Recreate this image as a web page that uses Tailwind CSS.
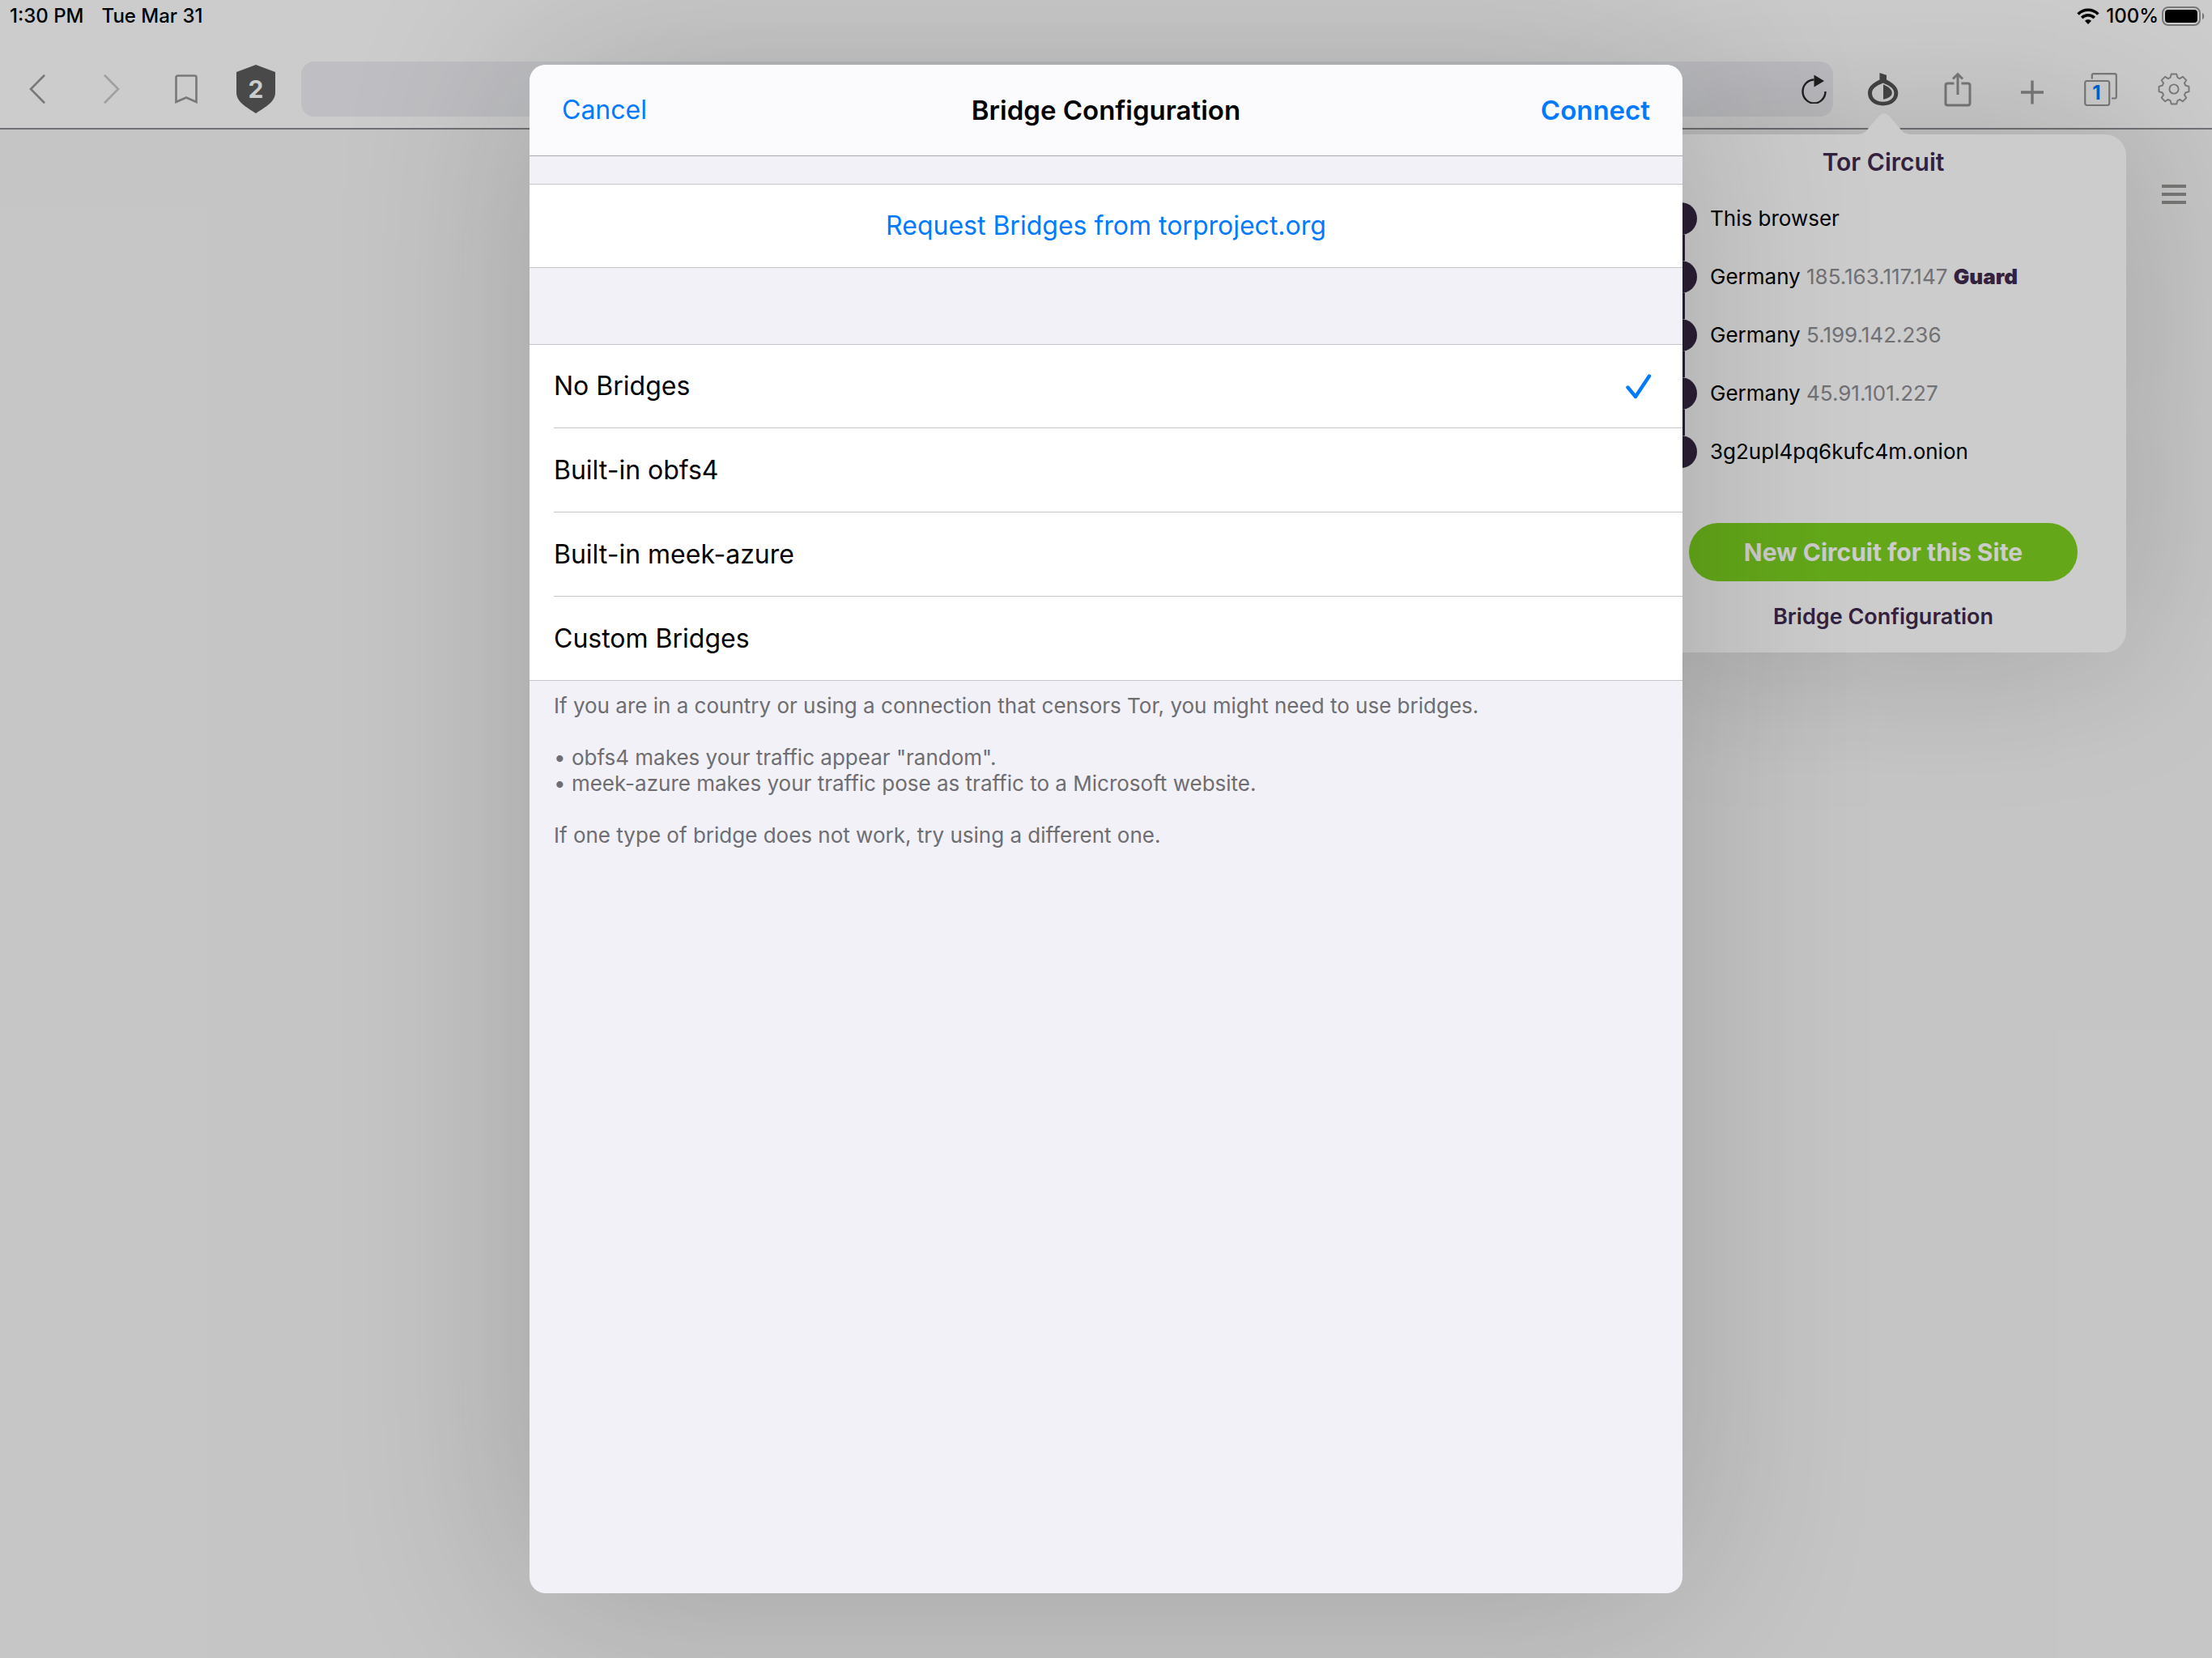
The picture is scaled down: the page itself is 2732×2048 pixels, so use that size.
<!DOCTYPE html>
<html lang="en">
<head>
<meta charset="utf-8">
<meta name="viewport" content="width=device-width, initial-scale=1">
<title>Bridge Configuration</title>
<script src="https://cdn.jsdelivr.net/npm/@tailwindcss/browser@4"></script>
</head>
<body class="bg-[#f7f7f7] font-['Inter',sans-serif] text-black">
<div class="relative flex min-h-screen flex-col overflow-hidden">

  <!-- Browser chrome -->
  <header class="border-b-2 border-[#8e8e93] bg-white">
    <div class="flex h-10 items-center justify-between pr-2 pl-3 text-[24px] leading-8 font-medium">
      <div class="flex gap-[22px]">
        <span>1:30 PM</span>
        <span>Tue Mar 31</span>
      </div>
      <div class="flex items-center gap-1">
        <svg class="mr-1 h-5 w-7" viewBox="0 0 28 20" fill="none" stroke="#000" stroke-width="3.6" aria-hidden="true">
          <path d="M1.6 7.4a17.5 17.5 0 0 1 24.8 0"/>
          <path d="M6.2 12a11 11 0 0 1 15.6 0"/>
          <path d="M14 20l-4-4.3a5.6 5.6 0 0 1 8 0z" fill="#000" stroke="none"/>
        </svg>
        <span>100%</span>
        <svg class="h-6 w-[54px]" viewBox="0 0 54 24" aria-label="Battery full">
          <rect x="1" y="1" width="46" height="22" rx="7" fill="none" stroke="#979797" stroke-width="2"/>
          <rect x="4" y="4" width="40" height="16" rx="4"/>
          <path d="M50 8c3 1 3 7 0 8z" fill="#979797"/>
        </svg>
      </div>
    </div>

    <nav class="flex h-[118px] items-center pt-[22px] text-[#979797]" aria-label="Browser toolbar">
      <button class="flex h-20 w-[92px] items-center justify-center" aria-label="Back">
        <svg class="h-9 w-5" viewBox="0 0 20 36" fill="none" stroke="currentColor" stroke-width="2.6" stroke-linecap="round"><path d="M18.3 1.5L2 18L18.3 34.5"/></svg>
      </button>
      <button class="flex h-20 w-[92px] items-center justify-center text-[#c9c9c9]" aria-label="Forward">
        <svg class="h-9 w-5" viewBox="0 0 20 36" fill="none" stroke="currentColor" stroke-width="2.6" stroke-linecap="round"><path d="M1.7 1.5L18 18L1.7 34.5"/></svg>
      </button>
      <button class="flex h-20 w-[92px] items-center justify-center" aria-label="Bookmarks">
        <svg class="h-9 w-7" viewBox="0 0 28 36" fill="none" stroke="currentColor" stroke-width="2.6"><path d="M1.5 34V3.500a2 2 0 0 1 2-2h21a2 2 0 0 1 2 2V34L14 28.500z"/></svg>
      </button>
      <button class="grid h-20 w-20 place-items-center" aria-label="Blocked content: 2">
        <svg class="col-start-1 row-start-1 h-[60px] w-12" viewBox="0 0 48 60" fill="#5c5c5c"><path d="M24 0L48 9V34C48 46 36 52 24 60C12 52 0 46 0 34V9Z"/></svg>
        <span class="col-start-1 row-start-1 text-[30px] leading-9 font-bold text-white">2</span>
      </button>
      <form class="ml-4 flex h-[68px] flex-1 items-center rounded-2xl bg-[#efeff4] pr-2">
        <input type="text" aria-label="Address" class="h-full min-w-0 flex-1 bg-transparent px-4 text-[32px] outline-none">
        <button type="button" aria-label="Reload">
          <svg class="h-9 w-[31px]" viewBox="0 0 31 36" fill="none" stroke="#282828" stroke-width="2.4"><path d="M15.500 6.500A14 14.500 0 1 0 29.500 21"/><path d="M15.500 0.500L28 8L15.500 15.500z" fill="#282828" stroke="none"/></svg>
        </button>
      </form>
      <button class="ml-4 flex h-20 w-[92px] items-center justify-center" aria-label="Tor circuit">
        <svg class="h-[41px] w-[38px]" viewBox="0 0 38 41" fill="#555"><path fill-rule="evenodd" d="M14.500 0L23 2.700V8.500C31 12.500 37.300 17.500 37.300 25C37.300 34 29.500 40.400 18.700 40.400C7.800 40.400 0 34 0 25C0 17.500 6 12.500 14.500 8.500ZM18.700 12.500C12 15.500 5 18.500 5 25C5 31.500 10.500 35.800 18.700 35.800C26.800 35.800 32.400 31.500 32.400 25C32.400 18.500 25.500 15.500 18.700 12.500Z"/><path d="M19 14.300C24 16.500 29.800 20 29.800 24.700C29.800 29 24.500 31.500 19 32.800Z"/></svg>
      </button>
      <button class="flex h-20 w-[92px] items-center justify-center" aria-label="Share">
        <svg class="h-[43px] w-[34px]" viewBox="0 0 34 43" fill="none" stroke="currentColor" stroke-width="3"><path d="M12.500 14H4.500a2.500 2.500 0 0 0-2.500 2.500V38.500a2.500 2.500 0 0 0 2.500 2.500H29.500a2.500 2.500 0 0 0 2.500-2.500V16.500a2.500 2.500 0 0 0-2.500-2.500H21.500"/><path d="M17 28V2.500M11 8.500L17 2.500l6 6"/></svg>
      </button>
      <button class="flex h-20 w-[92px] items-center justify-center" aria-label="New tab">
        <svg class="h-10 w-7" viewBox="0 0 28 40" fill="none" stroke="currentColor" stroke-width="3.4"><path d="M14 9.500v29M0 24h28"/></svg>
      </button>
      <button class="grid h-20 w-[76px] place-content-center" aria-label="Tabs: 1">
        <svg class="col-start-1 row-start-1 size-[41px]" viewBox="0 0 41 41" fill="none" stroke="currentColor" stroke-width="2.2"><rect x="1.200" y="10" width="30" height="30" rx="2.5"/><path d="M9.800 7.500V3.200a2 2 0 0 1 2-2H37.800a2 2 0 0 1 2 2V29.500a2 2 0 0 1-2 2H34"/></svg>
        <span class="col-start-1 row-start-1 w-8 self-end text-center text-[24px] leading-8 font-bold text-[#007aff]">1</span>
      </button>
      <button class="flex h-20 w-[100px] items-center justify-center pl-1.5" aria-label="Settings">
        <svg class="size-10" viewBox="-20 -20 40 40" fill="none" stroke="currentColor" stroke-width="1.9" stroke-linejoin="round">
          <path d="M-3.200-18.500H3.200L4.500-14.200Q6 -13.600 7.200-12.900L10.800-15.300L15.300-10.800L12.900-7.200Q13.700-6 14.200-4.500L18.500-3.200V3.200L14.200 4.500Q13.700 6 12.900 7.200L15.300 10.800L10.800 15.300L7.200 12.900Q6 13.600 4.500 14.200L3.200 18.500H-3.200L-4.500 14.200Q-6 13.600-7.200 12.900L-10.800 15.300L-15.300 10.800L-12.900 7.200Q-13.700 6-14.200 4.500L-18.500 3.200V-3.200L-14.200-4.500Q-13.700-6-12.900-7.200L-15.300-10.800L-10.800-15.300L-7.200-12.900Q-6-13.600-4.500-14.200Z"/>
          <circle r="5.6"/>
        </svg>
      </button>
    </nav>
  </header>

  <!-- Page content -->
  <main class="flex flex-1 items-start justify-end pt-[68px] pr-8">
    <button class="flex w-[30px] flex-col gap-1.5" aria-label="Menu">
      <span class="h-1 bg-[#969694]"></span>
      <span class="h-1 bg-[#969694]"></span>
      <span class="h-1 bg-[#969694]"></span>
    </button>
  </main>

  <!-- Tor circuit popover -->
  <aside class="absolute top-[166px] right-[106px] w-[600px] rounded-[26px] bg-white px-[60px] text-[#3f2b4f] shadow-[0_0_200px_rgba(0,0,0,0.2)]" aria-labelledby="circuit-title">
    <svg class="absolute -top-[26px] left-[266px] h-[27px] w-[70px]" viewBox="0 0 70 27" fill="#fff" aria-hidden="true"><path d="M0 26C8 26 12 24 16 18L28 4C32-1 38-1 42 4L54 18C58 24 62 26 70 26V27H0Z"/></svg>
    <h2 id="circuit-title" class="pt-3.5 text-center text-[30px] leading-10 font-semibold">Tor Circuit</h2>
    <ol class="-mx-[30px] mt-[30px] text-[26px] leading-8 text-black">
      <li class="flex h-[72px] gap-4"><span class="flex w-10 flex-col items-center"><span class="size-10 shrink-0 rounded-full bg-[#352541]"></span><span class="w-2.5 flex-1 bg-[#352541]"></span></span><span class="pt-1">This browser</span></li>
      <li class="flex h-[72px] gap-4"><span class="flex w-10 flex-col items-center"><span class="size-10 shrink-0 rounded-full bg-[#352541]"></span><span class="w-2.5 flex-1 bg-[#352541]"></span></span><span class="pt-1">Germany <span class="text-[#8e8e93]">185.163.117.147</span> <b class="font-black text-[#3f2b4f]">Guard</b></span></li>
      <li class="flex h-[72px] gap-4"><span class="flex w-10 flex-col items-center"><span class="size-10 shrink-0 rounded-full bg-[#352541]"></span><span class="w-2.5 flex-1 bg-[#352541]"></span></span><span class="pt-1">Germany <span class="text-[#8e8e93]">5.199.142.236</span></span></li>
      <li class="flex h-[72px] gap-4"><span class="flex w-10 flex-col items-center"><span class="size-10 shrink-0 rounded-full bg-[#352541]"></span><span class="w-2.5 flex-1 bg-[#352541]"></span></span><span class="pt-1">Germany <span class="text-[#8e8e93]">45.91.101.227</span></span></li>
      <li class="flex h-[72px] gap-4"><span class="size-10 rounded-full bg-[#352541]"></span><span class="pt-1">3g2upl4pq6kufc4m.onion</span></li>
    </ol>
    <button class="mt-9 h-[72px] w-full rounded-full bg-[#7ed321] text-[30px] leading-10 font-bold text-white">New Circuit for this Site</button>
    <button class="h-[88px] w-full text-[27px] leading-8 font-semibold">Bridge Configuration</button>
  </aside>

  <!-- Dimmed backdrop and form sheet -->
  <div class="absolute inset-0 flex justify-center bg-black/20 py-20">
    <section role="dialog" aria-modal="true" aria-labelledby="sheet-title" class="flex w-full max-w-[1424px] flex-col overflow-hidden rounded-[20px] bg-[#f2f1f7] text-[32px] leading-10 shadow-[0_0_240px_rgba(0,20,0,0.2)]">
      <header class="grid h-[113px] grid-cols-[1fr_auto_1fr] items-center border-b border-[#a9a9ac] bg-[#fbfbfd] px-10">
        <button class="justify-self-start text-[#007aff]">Cancel</button>
        <h1 id="sheet-title" class="text-[33px] font-semibold">Bridge Configuration</h1>
        <button class="justify-self-end text-[33px] font-semibold text-[#007aff]">Connect</button>
      </header>

      <a href="#" class="mt-[34px] flex h-[104px] items-center justify-center border-y border-[#c6c6c8] bg-white text-[#007aff]">Request Bridges from torproject.org</a>

      <fieldset aria-label="Bridges" class="mt-[94px] border-y border-[#c6c6c8] bg-white pl-[30px]">
        <label class="flex h-[103px] items-center justify-between border-b border-[#c6c6c8] pr-[38px]">No Bridges
          <input type="radio" name="bridge" class="peer sr-only" checked>
          <svg class="hidden h-[33px] w-8 peer-checked:block" viewBox="0 0 32 33" fill="none" stroke="#007aff" stroke-width="4.4" stroke-linecap="round" stroke-linejoin="round"><path d="M2.500 17.500L12 29L29 3.500"/></svg>
        </label>
        <label class="flex h-[104px] items-center justify-between border-b border-[#c6c6c8] pr-[38px]">Built-in obfs4
          <input type="radio" name="bridge" class="peer sr-only">
        </label>
        <label class="flex h-[104px] items-center justify-between border-b border-[#c6c6c8] pr-[38px]">Built-in meek-azure
          <input type="radio" name="bridge" class="peer sr-only">
        </label>
        <label class="flex h-[103px] items-center justify-between pr-[38px]">Custom Bridges
          <input type="radio" name="bridge" class="peer sr-only">
        </label>
      </fieldset>

      <div class="flex flex-col gap-8 px-[30px] pt-[15px] text-[26px] leading-8 text-[#6d6d72]">
        <p>If you are in a country or using a connection that censors Tor, you might need to use bridges.</p>
        <p>• obfs4 makes your traffic appear "random".<br>• meek-azure makes your traffic pose as traffic to a Microsoft website.</p>
        <p>If one type of bridge does not work, try using a different one.</p>
      </div>
    </section>
  </div>
</div>
</body>
</html>
